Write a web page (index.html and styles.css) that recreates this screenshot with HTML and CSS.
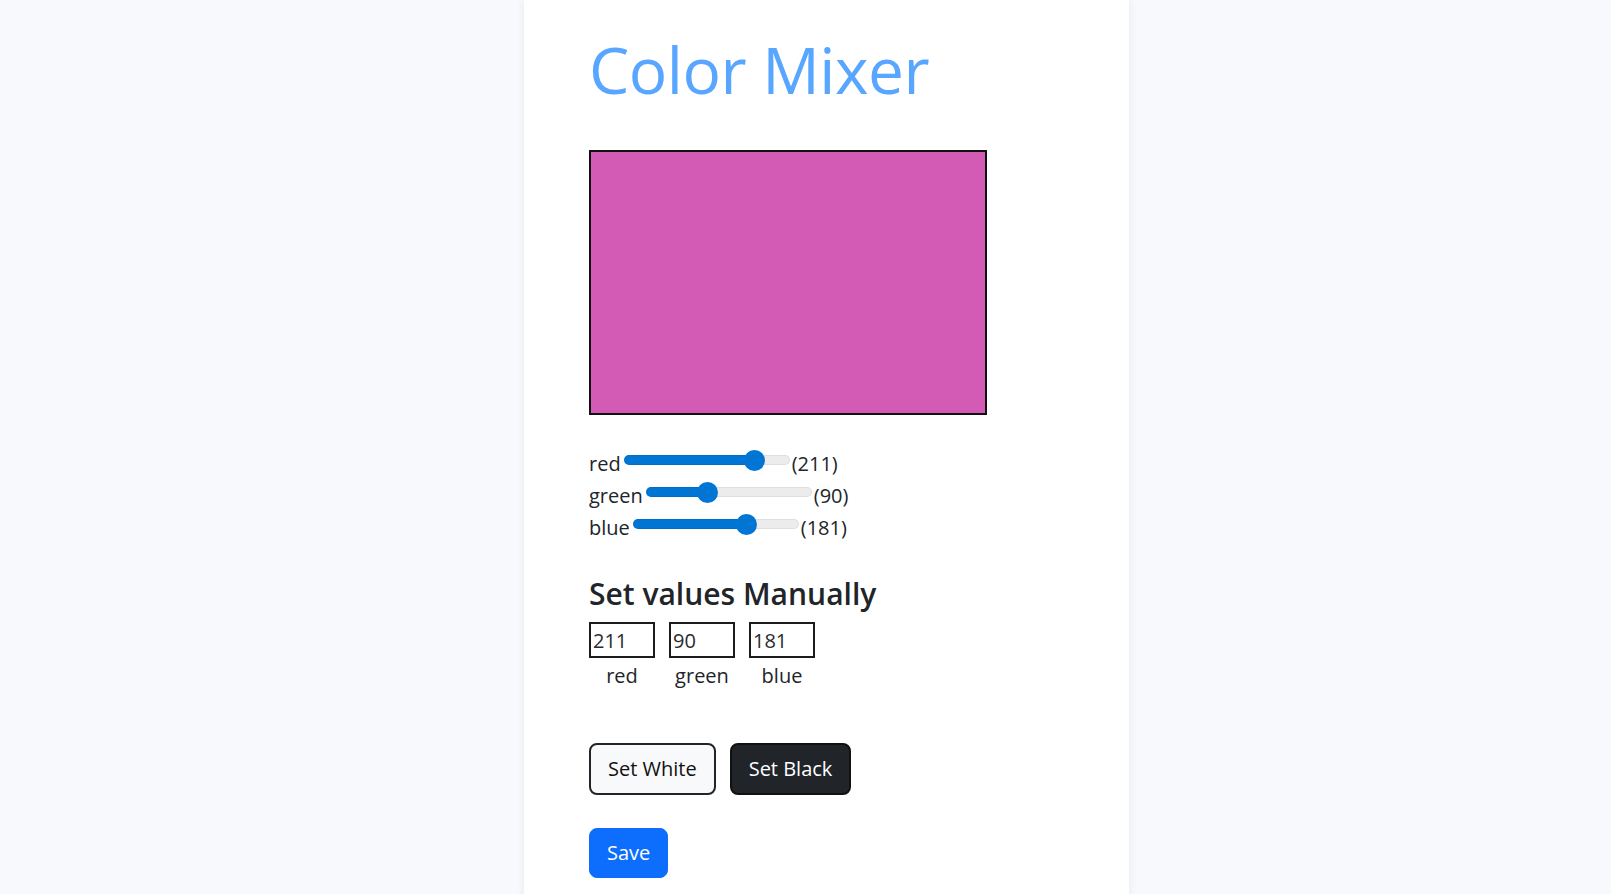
FILE: index.html
```html
<!DOCTYPE html>
<html lang="en">
<head>
<meta charset="utf-8">
<title>Color Mixer</title>
<link rel="stylesheet" href="styles.css">
</head>
<body>
<main class="page">
  <h1 class="title">Color Mixer</h1>
  <div class="swatch" style="background-color: rgb(211, 90, 181);"></div>

  <div class="sliders">
    <div class="slider-row">
      <span class="slider-label">red</span>
      <input class="range" type="range" min="0" max="255" value="211" style="--p: 78.6%;">
      <span class="slider-value">(211)</span>
    </div>
    <div class="slider-row">
      <span class="slider-label">green</span>
      <input class="range" type="range" min="0" max="255" value="90" style="--p: 37.2%;">
      <span class="slider-value">(90)</span>
    </div>
    <div class="slider-row">
      <span class="slider-label">blue</span>
      <input class="range" type="range" min="0" max="255" value="181" style="--p: 68.3%;">
      <span class="slider-value">(181)</span>
    </div>
  </div>

  <h4 class="subtitle">Set values Manually</h4>
  <div class="manual">
    <label class="field">
      <input class="num" type="text" value="211">
      <span class="field-label">red</span>
    </label>
    <label class="field">
      <input class="num" type="text" value="90">
      <span class="field-label">green</span>
    </label>
    <label class="field">
      <input class="num" type="text" value="181">
      <span class="field-label">blue</span>
    </label>
  </div>

  <div class="btn-row">
    <button class="btn btn-light" type="button">Set White</button>
    <button class="btn btn-dark" type="button">Set Black</button>
  </div>

  <div class="save-row">
    <button class="btn btn-primary" type="button">Save</button>
  </div>
</main>
</body>
</html>
```

FILE: styles.css
```css
html, body {
  margin: 0;
  padding: 0;
}

body {
  background: #f8f9fc;
  font-family: "Open Sans", "Noto Sans", sans-serif;
  font-size: 20px;
  line-height: 1.5;
  color: #212529;
}

.page {
  width: 605px;
  min-height: 100vh;
  margin-left: 524px;
  background: #ffffff;
  box-shadow: 0 0 8px rgba(0, 0, 0, 0.07);
  padding: 32px 0 40px 65px;
  box-sizing: border-box;
}

.title {
  margin: 0;
  font-size: 64px;
  font-weight: 400;
  line-height: 1.2;
  color: #58a6ff;
  height: 79px;
  letter-spacing: -0.5px;
}

.swatch {
  margin-top: 39px;
  width: 398px;
  height: 265px;
  box-sizing: border-box;
  border: 2px solid #111;
}

.sliders {
  margin-top: 29px;
  display: flex;
  flex-direction: column;
}

.slider-row {
  display: flex;
  align-items: center;
  height: 32px;
}

.slider-label,
.slider-value {
  padding-top: 7px;
  line-height: 30px;
}

.range {
  -webkit-appearance: none;
  appearance: none;
  width: 166px;
  height: 21px;
  margin: 0 2px 0 3px;
  padding: 0;
  background: transparent;
}

.range::-webkit-slider-runnable-track {
  height: 10px;
  border-radius: 5px;
  background: linear-gradient(to right, #0075d4 var(--p), #ececec var(--p));
  box-shadow: inset 0 0 0 1px rgba(0, 0, 0, 0.06);
}

.range::-webkit-slider-thumb {
  -webkit-appearance: none;
  appearance: none;
  width: 21px;
  height: 21px;
  margin-top: -5.5px;
  border-radius: 50%;
  background: #0075d4;
  border: none;
}

.subtitle {
  margin: 36px 0 0;
  font-size: 30px;
  font-weight: 600;
  line-height: 1.2;
  color: #212529;
}

.manual {
  margin-top: 10px;
  display: flex;
  gap: 14px;
}

.field {
  display: flex;
  flex-direction: column;
  align-items: center;
  width: 66px;
}

.num {
  width: 66px;
  height: 36px;
  box-sizing: border-box;
  border: 2px solid #1c1c1c;
  padding: 0 2px;
  margin: 0;
  font-family: inherit;
  font-size: 20px;
  color: #2b2b2b;
  background: #fff;
}

.field-label {
  margin-top: 3px;
  line-height: 30px;
}

.btn-row {
  margin-top: 52px;
  display: flex;
  gap: 14px;
}

.save-row {
  margin-top: 33px;
  display: flex;
}

.btn {
  font-family: inherit;
  font-size: 20px;
  line-height: 30px;
  padding: 0 17px;
  border-radius: 8px;
  cursor: pointer;
  box-sizing: border-box;
}

.btn-light {
  height: 52px;
  background: #f8f9fa;
  color: #111;
  border: 2px solid #212529;
}

.btn-dark {
  height: 52px;
  background: #212529;
  color: #fff;
  border: 2px solid #111;
}

.btn-primary {
  height: 50px;
  background: #0d6efd;
  color: #fff;
  border: 1px solid #0d6efd;
}
```
